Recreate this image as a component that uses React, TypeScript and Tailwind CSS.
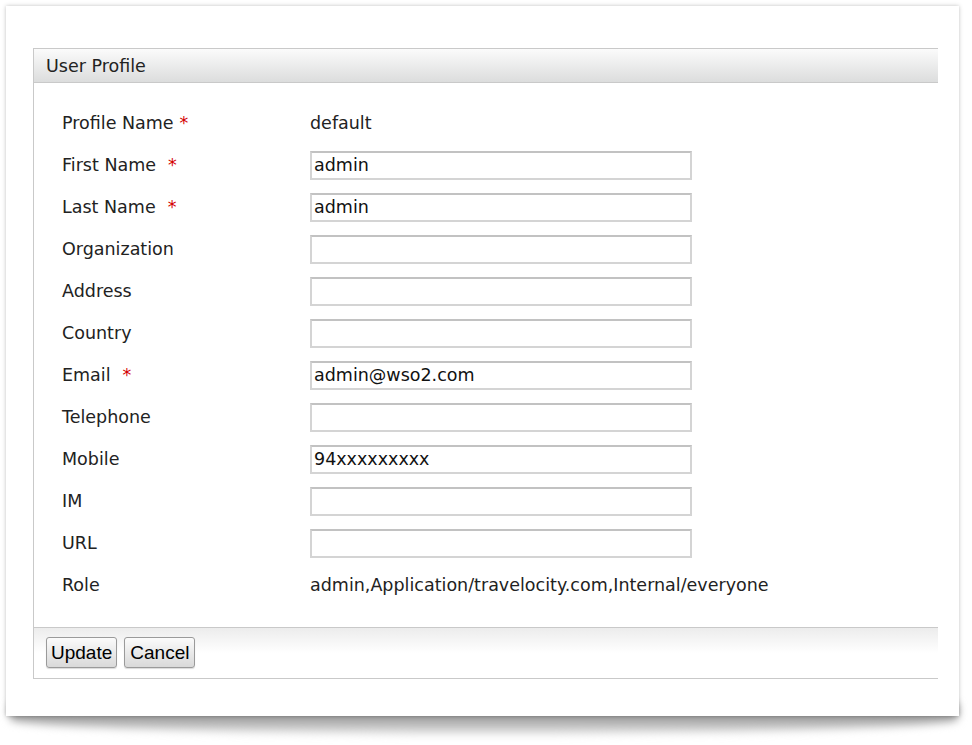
import React from 'react';

type Row = { label: string; required?: boolean; gap?: boolean; value?: string; text?: string };

const rows: Row[] = [
  { label: 'Profile Name', required: true, text: 'default' },
  { label: 'First Name', required: true, gap: true, value: 'admin' },
  { label: 'Last Name', required: true, gap: true, value: 'admin' },
  { label: 'Organization', value: '' },
  { label: 'Address', value: '' },
  { label: 'Country', value: '' },
  { label: 'Email', required: true, gap: true, value: 'admin@wso2.com' },
  { label: 'Telephone', value: '' },
  { label: 'Mobile', value: '94xxxxxxxxx' },
  { label: 'IM', value: '' },
  { label: 'URL', value: '' },
  { label: 'Role', text: 'admin,Application/travelocity.com,Internal/everyone' },
];

export default function App() {
  return (
    <div className="relative w-[972px] h-[745px] bg-white overflow-hidden font-['DejaVu_Sans',sans-serif] text-[17.5px] text-[#222]">
      {/* curled paper shadow */}
      <div className="absolute left-[10px] right-[14px] top-[704px] h-[30px] bg-gradient-to-b from-[#707070] via-[#a8a8a8] to-[#e4e4e4] blur-[4px] rounded-b-[50%]" />

      <div className="relative ml-[6px] mt-[6px] w-[953px] h-[710px] bg-white shadow-[0_0_4px_rgba(0,0,0,0.25)] pt-[42px] pl-[27px]">
        <div className="w-[905px] border-l border-y border-[#c9c9c9]">
          <div className="h-[34px] flex items-center pl-[12px] pt-[2px] border-b border-[#c9c9c9] bg-gradient-to-b from-[#fbfbfb] to-[#dcdddd] text-[#222]">
            User Profile
          </div>

          <div className="pt-[19px] pb-[21px]">
            {rows.map((r) => (
              <div key={r.label} className="h-[42px] flex items-center">
                <div className="w-[276px] pl-[28px] shrink-0">
                  {r.label}
                  {r.required && (
                    <span className={`text-[#d40000] ${r.gap ? 'ml-[12px]' : 'ml-[6px]'}`}>*</span>
                  )}
                </div>
                {r.text !== undefined ? (
                  <div>{r.text}</div>
                ) : (
                  <input
                    readOnly
                    value={r.value}
                    className="w-[382px] h-[29px] px-[2px] bg-white border-2 border-[#d4d4d4] border-t-[#c2c2c2] text-[17.5px] text-[#111] outline-none font-['DejaVu_Sans',sans-serif]"
                  />
                )}
              </div>
            ))}
          </div>

          <div className="h-[51px] border-t border-[#c9c9c9] bg-gradient-to-b from-[#ececec] via-white to-white flex items-center gap-[7px] pl-[12px] pb-[2px]">
            <button className="h-[31px] px-[4px] rounded-[3px] border border-[#9a9a9a] bg-gradient-to-b from-[#fbfbfb] to-[#d9d9d9] font-['Liberation_Sans',Arial,sans-serif] text-[19px] text-black leading-none shadow-[0_1px_1px_rgba(0,0,0,0.15)]">
              Update
            </button>
            <button className="h-[31px] px-[5px] rounded-[3px] border border-[#9a9a9a] bg-gradient-to-b from-[#fbfbfb] to-[#d9d9d9] font-['Liberation_Sans',Arial,sans-serif] text-[19px] text-black leading-none shadow-[0_1px_1px_rgba(0,0,0,0.15)]">
              Cancel
            </button>
          </div>
        </div>
      </div>
    </div>
  );
}
